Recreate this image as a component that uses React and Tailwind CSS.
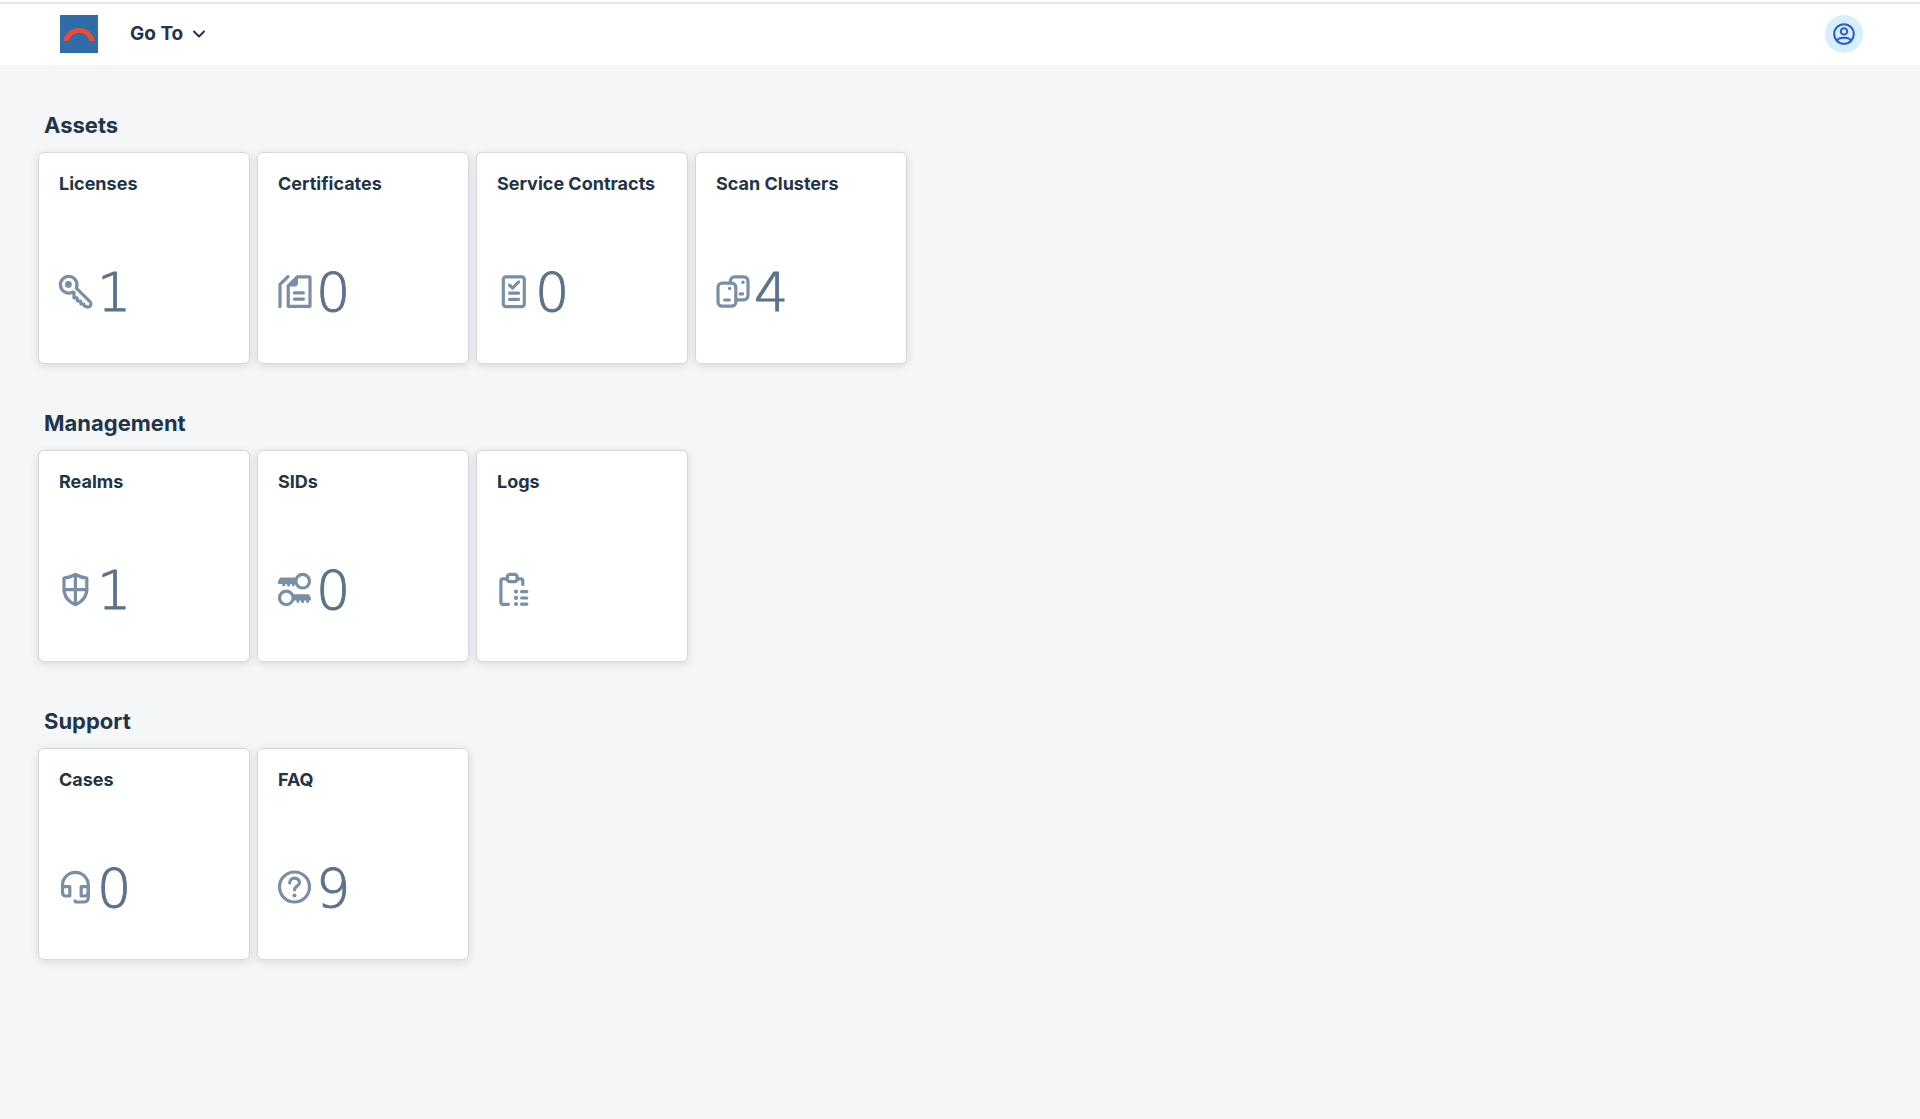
import { useState } from "react";

const KeyIcon = () => (
  <>
    <path d="M17.3 13.2 L31 26.6 Q32 27.6 31.8 29 L31.5 30.6 Q31.2 31.8 30 31.8 H27.6 L25.3 30.8 L24.8 29 H22 L21.5 26 H18.4 L18 22.8 H15 V17.4 L13.4 17.2 A8.3 8.3 0 1 1 17.3 13.2 Z" />
    <circle cx="9.4" cy="9.4" r="3.4" fill="currentColor" stroke="none" />
  </>
);

const CertificateIcon = () => (
  <>
    <path d="M10 1.6 L2 9.4 V31.6" />
    <path d="M19.2 1.8 H31 Q32 1.8 32 2.8 V30.4 Q32 31.4 31 31.4 H11.2 Q10.2 31.4 10.2 30.4 V10.8 Z" />
    <path d="M19.6 2 V8.4 Q19.6 11 17 11 H10.4 Z" fill="currentColor" strokeWidth="1" />
    <path d="M16.4 17.8 H25.4 M16.4 24.2 H25.4" />
  </>
);

const ContractIcon = () => (
  <>
    <rect x="6.3" y="1.8" width="21" height="29.8" rx="2.6" />
    <path d="M12.6 10.2 L15.7 13 L21.6 7" />
    <path d="M12.6 18.2 H21.6 M12.6 24.4 H21.6" />
  </>
);

const ClusterIcon = () => (
  <>
    <rect x="2" y="8.2" width="17.8" height="23" rx="4" />
    <path d="M14.4 7.6 V6 A4.2 4.2 0 0 1 18.6 1.8 H27.8 A4.2 4.2 0 0 1 32 6 V20.6 A4.2 4.2 0 0 1 27.8 24.8 H20.5" />
    <path d="M8.6 25 H13.4 M24.2 18.9 H26.6" />
    <circle cx="13.6" cy="13.5" r="1.7" fill="currentColor" stroke="none" />
    <circle cx="27" cy="7.2" r="1.7" fill="currentColor" stroke="none" />
  </>
);

const ShieldIcon = () => (
  <>
    <path d="M16.4 1.5 Q22 4.6 27.8 5 V15.5 Q27.8 27 16.4 31.6 Q5 27 5 15.5 V5 Q10.8 4.6 16.4 1.5 Z" />
    <path d="M16.4 1.5 V31.6 M5 16.6 H27.8" />
  </>
);

const SidIcon = () => (
  <>
    <circle cx="24.7" cy="8.2" r="6.8" />
    <path
      d="M2.2 4.6 H18.4 L17.4 11 H16.6 V13.2 H14 V11 H12.6 L11.4 13.4 H9.6 L8.8 11 H7.2 V13.2 H4.4 V11 H1 Q0 11 0 10 V8.4 Z"
      fill="currentColor"
      stroke="none"
    />
    <circle cx="8.3" cy="24.9" r="6.8" />
    <path
      d="M14.8 21.2 H30.8 L33 25 V26.6 Q33 27.6 32 27.6 H31 V29.8 H28.2 V27.6 H26.4 L25.6 30 H23.8 L22.6 27.6 H21.2 V29.8 H18.6 V27.6 H14.8 Z"
      fill="currentColor"
      stroke="none"
    />
  </>
);

const LogIcon = () => (
  <>
    <path d="M10 5.8 H6 Q3.9 5.8 3.9 8 V29 Q3.9 31.3 6 31.3 H11.4" />
    <path d="M20.6 5.8 H24 Q25.8 5.8 25.8 8 V11.4" />
    <rect x="10.3" y="1.4" width="9.8" height="7.2" rx="2.6" />
    <path d="M24.6 18.7 H29.8 M24.6 25 H29.8 M24.6 31.2 H29.8" />
    <g fill="currentColor" stroke="none">
      <circle cx="19" cy="18.6" r="2.1" />
      <circle cx="19" cy="24.9" r="2.1" />
      <circle cx="19" cy="31.1" r="2.1" />
    </g>
  </>
);

const HeadsetIcon = () => (
  <>
    <path d="M3.5 15.8 V14.2 A12.9 12.9 0 0 1 29.3 14.2 V26.2 Q29.3 31 24.5 31 H17.6 Q16 31 16 29.8" />
    <path d="M3.5 15.6 H10.8 V25 H7.3 Q3.5 25 3.5 21.2 Z" />
    <path d="M29.3 15.6 H22.2 V25 H25.5 Q29.3 25 29.3 21.2 Z" />
  </>
);

const FaqIcon = () => (
  <>
    <circle cx="16.5" cy="16" r="15" />
    <path d="M11.7 12 C11.7 5.6 21.5 5.6 21.5 11.8 C21.5 15.4 16.5 15 16.5 18.8" />
    <circle cx="16.5" cy="24.4" r="2" fill="currentColor" stroke="none" />
  </>
);

const sections = [
  {
    title: "Assets",
    tiles: [
      { title: "Licenses", count: 1, Icon: KeyIcon },
      { title: "Certificates", count: 0, Icon: CertificateIcon },
      { title: "Service Contracts", count: 0, Icon: ContractIcon },
      { title: "Scan Clusters", count: 4, Icon: ClusterIcon },
    ],
  },
  {
    title: "Management",
    tiles: [
      { title: "Realms", count: 1, Icon: ShieldIcon },
      { title: "SIDs", count: 0, Icon: SidIcon },
      { title: "Logs", Icon: LogIcon },
    ],
  },
  {
    title: "Support",
    tiles: [
      { title: "Cases", count: 0, Icon: HeadsetIcon },
      { title: "FAQ", count: 9, Icon: FaqIcon },
    ],
  },
];

function Tile({ title, count, Icon }) {
  return (
    <a
      href="#"
      className="flex flex-col justify-between w-[212px] h-[212px] px-5 pt-[17px] pb-[38px] bg-white rounded-md border border-[#d5d8db] shadow-[0_2px_8px_rgba(34,53,72,0.14)] hover:bg-gray-50"
    >
      <h3 className="text-lg leading-7 font-bold whitespace-nowrap">{title}</h3>
      <div className="flex items-center gap-1 h-16">
        <svg
          viewBox="0 0 34 34"
          className="w-[34px] h-[34px] mb-0.5 shrink-0 overflow-visible text-[#788fa6]"
          fill="none"
          stroke="currentColor"
          strokeWidth="3.2"
          strokeLinecap="round"
          strokeLinejoin="round"
          aria-hidden="true"
        >
          <Icon />
        </svg>
        {count !== undefined && (
          <span className="font-['DejaVu_Sans_Light','DejaVu_Sans',sans-serif] font-extralight text-[54px] leading-[66px] text-[#5b738b] [-webkit-text-stroke:1px_#5b738b]">
            {count}
          </span>
        )}
      </div>
    </a>
  );
}

export default function App() {
  const [open, setOpen] = useState(false);

  return (
    <div className="min-h-screen bg-[#f5f6f7] text-[#223548] font-['Inter','Liberation_Sans',sans-serif]">
      <header className="flex items-center justify-between h-[65px] pt-[3px] pl-[60px] pr-[57px] bg-white">
        <div className="fixed inset-x-0 top-[2px] h-[2px] bg-[#e8e8e8]" />
        <div className="flex items-center gap-8">
          <a href="#" aria-label="Home">
            <svg viewBox="0 0 38 38" className="w-[38px] h-[38px]">
              <rect width="38" height="38" fill="#2f6ca8" />
              <path d="M3 26 C7 8.500 31 8.500 35 26 H29.500 C26 15 12 15 8.500 26 Z" fill="#e84c36" />
            </svg>
          </a>
          <button
            className="flex items-center gap-2 text-[19px] font-bold"
            aria-expanded={open}
            onClick={() => setOpen(!open)}
          >
            Go To
            <svg viewBox="0 0 16 16" className="w-4 h-4" fill="none" stroke="currentColor" strokeWidth="2" strokeLinecap="round" strokeLinejoin="round">
              <path d="M3 5.500 L8 10.500 L13 5.500" />
            </svg>
          </button>
        </div>
        <button
          className="flex items-center justify-center w-[38px] h-[38px] rounded-full bg-[#d7eefc] text-[#2a5bd0]"
          aria-label="Profile"
        >
          <svg viewBox="0 0 22 22" className="w-[22px] h-[22px]" fill="none" stroke="currentColor" strokeWidth="2">
            <circle cx="11" cy="11" r="9.8" />
            <circle cx="11" cy="8.400" r="3.200" />
            <path d="M4.400 17.800 C5 13.600 17 13.600 17.600 17.800" />
          </svg>
        </button>
      </header>

      <main className="flex flex-col gap-11 px-[38px] pt-[45px] pb-12">
        {sections.map((section) => (
          <section key={section.title}>
            <h2 className="pl-1.5 pb-3 text-[22px] leading-[30px] font-bold">{section.title}</h2>
            <div className="flex flex-wrap gap-[7px]">
              {section.tiles.map((tile) => (
                <Tile key={tile.title} {...tile} />
              ))}
            </div>
          </section>
        ))}
      </main>
    </div>
  );
}
